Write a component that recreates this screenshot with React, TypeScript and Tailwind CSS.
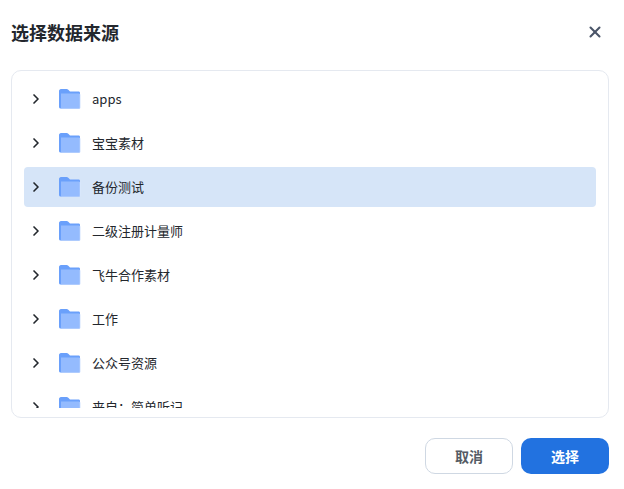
import { ChevronRight, X } from 'lucide-react'

const folders = ['apps', '宝宝素材', '备份测试', '二级注册计量师', '飞牛合作素材', '工作', '公众号资源', '来自：简单听记']

function FolderIcon() {
  return (
    <svg width="24" height="22" viewBox="0 0 24 22" className="shrink-0">
      <path d="M1 3.2C1 2 1.8 1 3 1h5.6c.7 0 1.2.2 1.7.7L12 3.4h8.6c.8 0 1.4.6 1.4 1.4V20.5H2.6C1.7 20.5 1 19.8 1 19z" fill="#6aa0fb" />
      <path d="M3.4 6h18.2c.6 0 1 .4 1 1v12.6c0 .6-.4 1-1 1H3.4z" fill="#dbe7fe" />
      <path d="M3 5.4h17.8c.6 0 1 .4 1 1V19.6c0 .6-.4 .9-1 .9H3z" fill="#94bbfe" />
    </svg>
  )
}

export default function App() {
  return (
    <div className="w-[624px] h-[489px] bg-white overflow-hidden font-['Noto_Sans_CJK_SC','Noto_Sans',sans-serif] text-[#222831]">
      <div className="h-[70px] pl-[11px] pr-[20px] pb-[6px] flex items-center justify-between">
        <h1 className="text-[18px] font-bold text-[#23272d]">选择数据来源</h1>
        <X className="w-[18px] h-[18px] text-[#4a5568]" strokeWidth={2.75} />
      </div>

      <div className="ml-[11px] mr-[15px] h-[348px] border border-[#e5e9f0] rounded-[10px] px-3 pt-2 pb-[9px]">
        <div className="h-full overflow-hidden flex flex-col gap-1">
          {folders.map((name, i) => (
            <div
              key={name}
              className={`h-10 shrink-0 flex items-center rounded-[4px] ${i === 2 ? 'bg-[#d6e5f8]' : ''}`}
            >
              <ChevronRight className="w-4 h-4 ml-1 text-[#23272d] shrink-0" strokeWidth={2.5} />
              <div className="ml-[14px]">
                <FolderIcon />
              </div>
              <span className="ml-[10px] text-[13px] text-[#23272d]">{name}</span>
            </div>
          ))}
        </div>
      </div>

      <div className="mt-5 mr-[15px] flex justify-end gap-2">
        <button className="w-[88px] h-9 rounded-[10px] border border-[#cfd8e3] bg-white text-sm font-bold text-[#555b65]">
          取消
        </button>
        <button className="w-[88px] h-9 rounded-[10px] bg-[#2272e0] text-sm font-bold text-white">
          选择
        </button>
      </div>
    </div>
  )
}
